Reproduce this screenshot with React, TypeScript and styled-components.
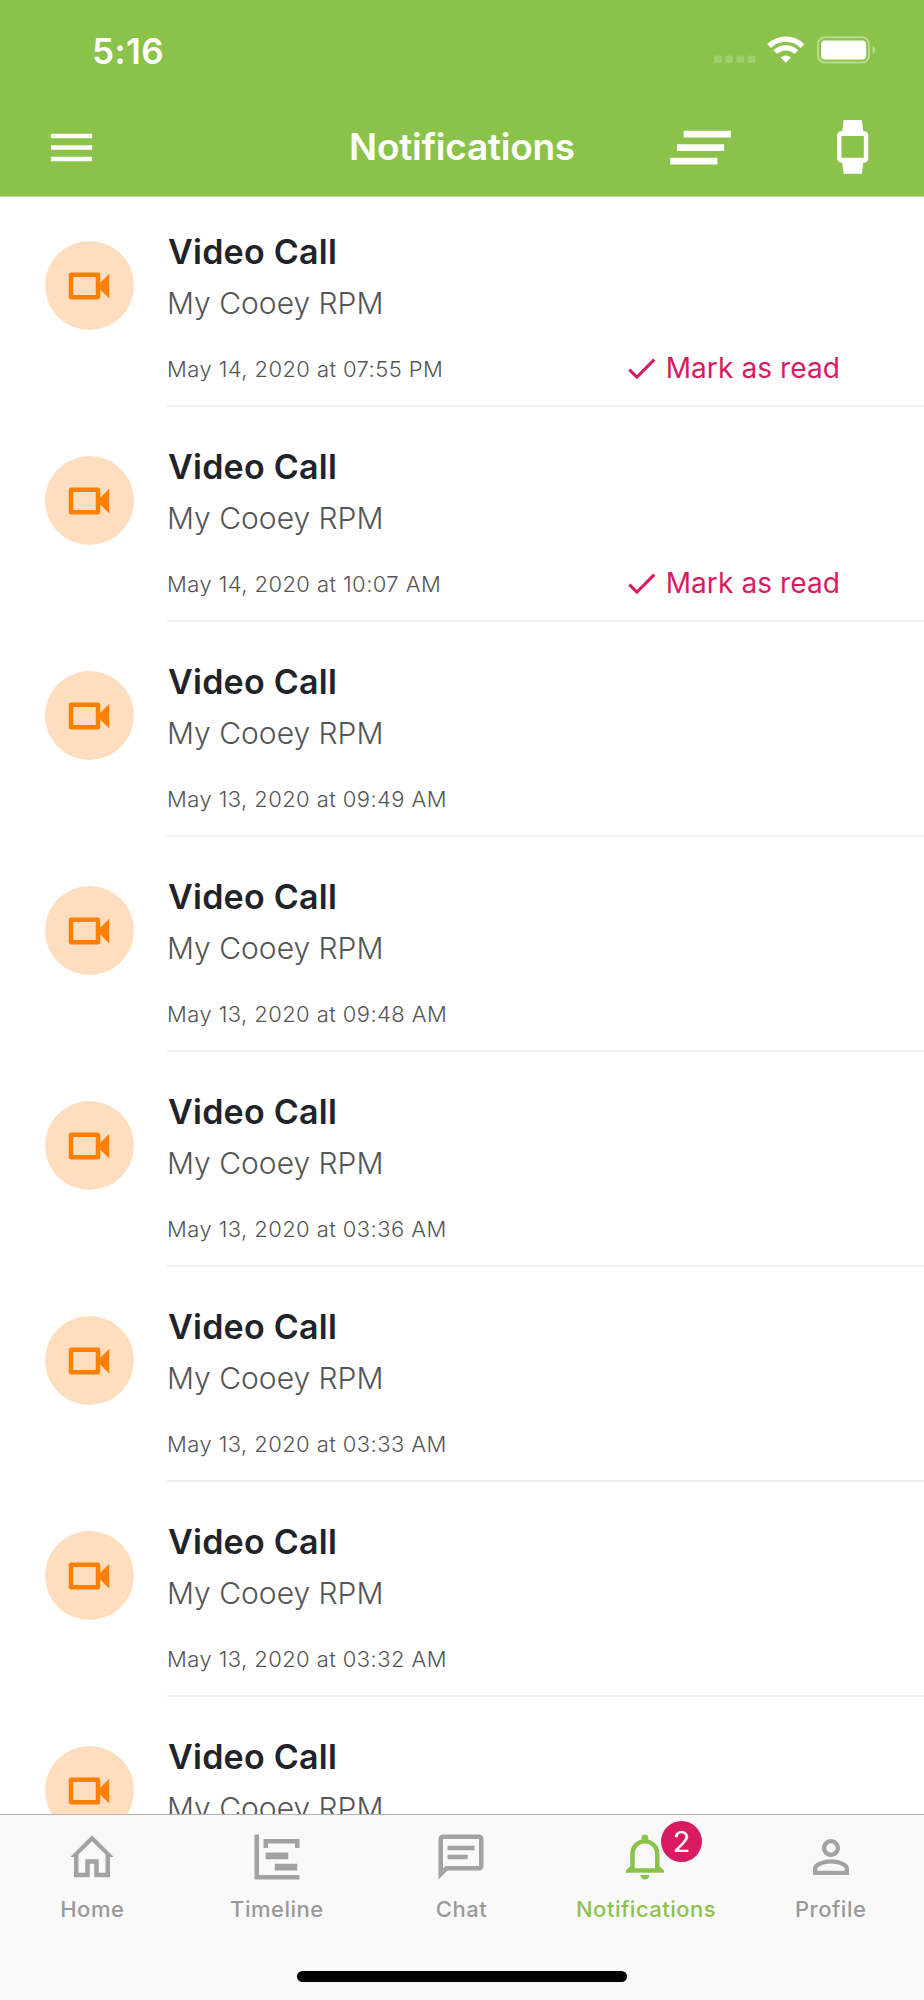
import React from "react";
import styled, { createGlobalStyle } from "styled-components";
import { MdMenu, MdClearAll, MdOutlineVideocam, MdCheck, MdPersonOutline } from "react-icons/md";

const GlobalStyle = createGlobalStyle`
  * { box-sizing: border-box; }
  body { margin: 0; background: #fff; font-family: Inter, "Liberation Sans", sans-serif; }
`;

const Screen = styled.div`
  width: 924px;
  height: 2000px;
  display: flex;
  flex-direction: column;
  overflow: hidden;
  background: #fff;
`;

const Header = styled.header`
  flex: none;
  height: 197px;
  background: #8bc34a;
  border-bottom: 1px solid #b9db92;
  color: #fff;
`;

const StatusBar = styled.div`
  height: 98px;
  display: flex;
  align-items: center;
  justify-content: space-between;
  padding: 4px 48px 0 92px;
`;

const Time = styled.span`
  font-size: 35px;
  font-weight: 600;
  letter-spacing: 0.4px;
`;

const StatusIcons = styled.svg`
  display: block;
  width: 162px;
  height: 28px;
  margin-bottom: 2px;
`;

const NavBar = styled.div`
  height: 98px;
  display: grid;
  grid-template-columns: 1fr auto 1fr;
  align-items: center;
  padding: 0 44px;
  svg { display: block; }
`;

const Title = styled.h1`
  margin: 0;
  font-size: 37px;
  line-height: 44px;
  font-weight: 600;
  letter-spacing: -0.25px;
`;

const Actions = styled.div`
  display: flex;
  align-items: center;
  justify-content: space-between;
  padding: 0 11px 0 85px;
`;

const List = styled.main`
  flex: 1;
  min-height: 0;
  overflow: hidden;
`;

const Row = styled.article`
  display: flex;
  height: 210px;
  margin-bottom: 5px;
  padding-left: 45px;
`;

const Avatar = styled.div`
  flex: none;
  display: flex;
  align-items: center;
  justify-content: center;
  width: 89px;
  height: 89px;
  margin: 44px 33px 0 0;
  padding-right: 1px;
  border-radius: 50%;
  background: #ffdec0;
  color: #ff8000;
`;

const Body = styled.div`
  flex: 1;
  display: flex;
  flex-direction: column;
  padding-top: 34px;
  border-bottom: 2px solid #efeff4;
`;

const Name = styled.h2`
  margin: 0;
  padding-left: 1px;
  font-size: 34px;
  line-height: 42px;
  font-weight: 600;
  letter-spacing: 0.25px;
  color: #212328;
`;

const From = styled.p`
  margin: 10px 0 0;
  font-size: 30px;
  line-height: 40px;
  font-weight: 300;
  color: #555;
`;

const Meta = styled.div`
  display: flex;
  align-items: center;
  justify-content: space-between;
  height: 40px;
  margin-top: 25px;
  padding-right: 84px;
`;

const DateText = styled.time`
  padding-top: 2px;
  font-size: 22px;
  font-weight: 300;
  letter-spacing: 0.42px;
  color: #555;
`;

const MarkRead = styled.button`
  display: flex;
  align-items: center;
  gap: 6px;
  padding: 0;
  border: 0;
  background: none;
  font: 400 28px/40px Inter, sans-serif;
  letter-spacing: 0.1px;
  color: #d81b60;
`;

const TabBar = styled.nav`
  flex: none;
  height: 186px;
  display: flex;
  flex-direction: column;
  align-items: center;
  background: #f9f9f9;
  border-top: 1px solid #b2b2b2;
`;

const Tabs = styled.div`
  display: flex;
  align-self: flex-start;
  width: 923px;
  height: 156px;
`;

const Tab = styled.a<{ $active?: boolean }>`
  flex: 1 1 0;
  min-width: 0;
  display: flex;
  flex-direction: column;
  align-items: center;
  padding-top: 15px;
  font-size: 22px;
  line-height: 28px;
  font-weight: 500;
  letter-spacing: 0.5px;
  color: ${(p) => (p.$active ? "#8bc34a" : "#999")};
`;

const TabIcon = styled.span<{ $active?: boolean }>`
  position: relative;
  width: 54px;
  height: 54px;
  margin-bottom: 11px;
  color: ${(p) => (p.$active ? "#8bc34a" : "#a2a2a2")};
  svg { display: block; }
`;

const Badge = styled.span`
  position: absolute;
  left: 42px;
  top: -9px;
  width: 41px;
  height: 41px;
  border-radius: 50%;
  background: #d81b60;
  color: #fff;
  font-size: 29px;
  font-weight: 400;
  letter-spacing: 0;
  line-height: 41px;
  text-align: center;
`;

const HomeIndicator = styled.div`
  width: 330px;
  height: 11px;
  border-radius: 6px;
  background: #000;
`;

const Glyph = ({ d }: { d: string }) => (
  <svg width="54" height="54" viewBox="0 0 24 24" fill="currentColor" fillRule="evenodd">
    <path d={d} />
  </svg>
);

const HOME = "M12 2.3L21.7 12H20V21H13V15H11V21H4V12H2.3ZM6 19H9V13H15V19H18V10.9L12 4.95L6 10.9Z";
const TIMELINE = "M2 2H4V20H22V22H2ZM7 10H17V13H7ZM11 15H21V18H11ZM6 4H22V8H20V6H8V8H6Z";
const CHAT =
  "M20 2A2 2 0 0 1 22 4V16A2 2 0 0 1 20 18H6L2 22V4C2 2.89 2.9 2 4 2ZM4 4V17.17L5.17 16H20V4ZM6 7H18V9H6ZM6 11H15V13H6Z";
const BELL =
  "M16 17H7V10.5C7 8 9 6 11.5 6S16 8 16 10.5V17ZM18 16V10.5C18 7.43 15.86 4.86 13 4.18V3.5A1.5 1.5 0 0 0 10 3.5V4.18C7.13 4.86 5 7.43 5 10.5V16L3 18V19H20V18ZM11.5 22A2 2 0 0 0 13.5 20H9.5A2 2 0 0 0 11.5 22Z";

const WatchIcon = () => (
  <svg width="32" height="54" viewBox="0 0 32 54" fill="#fff" fillRule="evenodd">
    <path d="M6.7 0H24.8L26.3 10.9C29 10.9 31.3 13 31.3 15.5V38.3C31.3 41 29 42.8 26.3 42.8L24.8 53.7H6.7L5.2 42.8C2.3 42.8 0 41 0 38.3V15.5C0 13 2.3 10.9 5.2 10.9ZM4.4 16V37.7H26.8V16Z" />
  </svg>
);

const items = [
  { date: "May 14, 2020 at 07:55 PM", unread: true },
  { date: "May 14, 2020 at 10:07 AM", unread: true },
  { date: "May 13, 2020 at 09:49 AM" },
  { date: "May 13, 2020 at 09:48 AM" },
  { date: "May 13, 2020 at 03:36 AM" },
  { date: "May 13, 2020 at 03:33 AM" },
  { date: "May 13, 2020 at 03:32 AM" },
  { date: "" },
];

export default function App() {
  return (
    <Screen>
      <GlobalStyle />
      <Header>
        <StatusBar>
          <Time>5:16</Time>
          <StatusIcons viewBox="0 0 162 28">
            <g fill="#fff" fillOpacity="0.2">
              <rect x="0" y="19.6" width="8" height="7.4" rx="2.4" />
              <rect x="11.1" y="19.6" width="8" height="7.4" rx="2.4" />
              <rect x="22.3" y="19.6" width="8" height="7.4" rx="2.4" />
              <rect x="33.4" y="19.6" width="8" height="7.4" rx="2.4" />
            </g>
            <g fill="none" stroke="#fff" strokeWidth="5.3">
              <path d="M55.1 10.1A23.6 23.6 0 0 1 88.5 10.1" />
              <path d="M61.2 16.2A15 15 0 0 1 82.4 16.2" />
            </g>
            <path d="M71.8 26.8L66.6 21.6A7.3 7.3 0 0 1 77 21.6Z" fill="#fff" />
            <rect x="104" y="1.2" width="51" height="25.4" rx="7" fill="none" stroke="#fff" strokeOpacity="0.4" strokeWidth="2" />
            <rect x="107" y="4.4" width="45.2" height="19.2" rx="4" fill="#fff" />
            <path d="M158.6 9.4A5 5 0 0 1 158.6 18.4Z" fill="#fff" fillOpacity="0.4" />
          </StatusIcons>
        </StatusBar>
        <NavBar>
          <MdMenu size={55} />
          <Title>Notifications</Title>
          <Actions>
            <MdClearAll size={81} />
            <WatchIcon />
          </Actions>
        </NavBar>
      </Header>
      <List>
        {items.map((item, i) => (
          <Row key={i}>
            <Avatar><MdOutlineVideocam size={54} /></Avatar>
            <Body>
              <Name>Video Call</Name>
              <From>My Cooey RPM</From>
              <Meta>
                <DateText>{item.date}</DateText>
                {item.unread && <MarkRead><MdCheck size={37} />Mark as read</MarkRead>}
              </Meta>
            </Body>
          </Row>
        ))}
      </List>
      <TabBar>
        <Tabs>
          <Tab><TabIcon><Glyph d={HOME} /></TabIcon>Home</Tab>
          <Tab><TabIcon><Glyph d={TIMELINE} /></TabIcon>Timeline</Tab>
          <Tab><TabIcon><Glyph d={CHAT} /></TabIcon>Chat</Tab>
          <Tab $active><TabIcon $active><Glyph d={BELL} /><Badge>2</Badge></TabIcon>Notifications</Tab>
          <Tab><TabIcon><MdPersonOutline size={54} /></TabIcon>Profile</Tab>
        </Tabs>
        <HomeIndicator />
      </TabBar>
    </Screen>
  );
}
